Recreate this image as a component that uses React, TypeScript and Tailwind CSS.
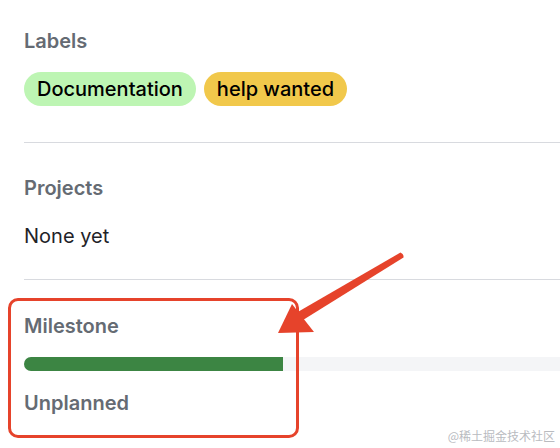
import React from 'react';

const LABELS = [
  { name: 'Documentation', bg: 'bg-[#bdf5b3]' },
  { name: 'help wanted', bg: 'bg-[#f1c84b]' },
];

function Divider() {
  return <div className="ml-6 h-px bg-[#d8dadf]" />;
}

export default function App() {
  return (
    <div
      className="relative h-[448px] w-[560px] overflow-hidden bg-white"
      style={{ fontFamily: 'Inter, "Noto Sans", sans-serif' }}
    >
      {/* Labels */}
      <section className="px-6 pt-[29px] pb-[36px]">
        <h3 className="text-[20px] leading-6 font-semibold text-[#656b73]">Labels</h3>
        <div className="mt-[19px] flex gap-2">
          {LABELS.map((label) => (
            <span
              key={label.name}
              className={`${label.bg} rounded-full px-[13px] text-[20px] leading-[34px] font-medium text-black`}
            >
              {label.name}
            </span>
          ))}
        </div>
      </section>
      <Divider />

      {/* Projects */}
      <section className="px-6 pt-[33px] pb-[31px]">
        <h3 className="text-[20px] leading-6 font-semibold text-[#656b73]">Projects</h3>
        <p className="mt-6 text-[20px] leading-6 text-[#1f2328]">None yet</p>
      </section>
      <Divider />

      {/* Milestone */}
      <section className="pl-6 pt-[34px] pb-[33px]">
        <h3 className="text-[20px] leading-6 font-semibold text-[#656b73]">Milestone</h3>
        <div className="mt-[19px] flex h-[14px] overflow-hidden rounded-l-full bg-[#f4f5f7]">
          <div className="h-full w-[259px] bg-[#3c8543]" />
        </div>
        <p className="mt-[20px] text-[20px] leading-6 font-semibold text-[#656b73]">Unplanned</p>
      </section>
      <Divider />

      {/* annotation box */}
      <div className="absolute left-[8px] top-[298px] h-[140px] w-[291px] rounded-[10px] border-[3px] border-[#e6432b]" />

      {/* arrow */}
      <svg className="absolute left-0 top-0" width="560" height="448" viewBox="0 0 560 448">
        <path
          d="M400.5 252.5 Q404 254 403.5 257.5 L303 320 L296 313 Z"
          fill="#e6432b"
        />
        <path d="M278 333 L292 304 L314 332 Z" fill="#e6432b" />
      </svg>

      <span
        className="absolute right-[5px] top-[428px] text-[12px] leading-4 text-[#b9bbbf]"
        style={{ fontFamily: '"Noto Sans CJK SC", sans-serif' }}
      >
        @稀土掘金技术社区
      </span>
    </div>
  );
}
